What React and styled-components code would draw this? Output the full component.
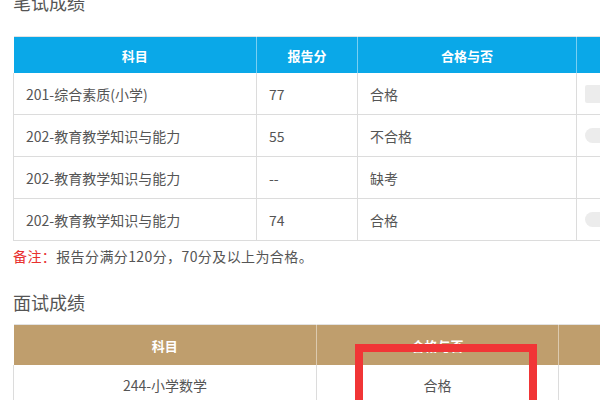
import React from 'react';
import styled, { createGlobalStyle } from 'styled-components';

const GlobalStyle = createGlobalStyle`
    html, body {
        margin: 0;
        padding: 0;
        background: #fff;
        overflow: hidden;
    }
    body {
        font-family: "Noto Sans CJK SC", "Noto Sans", sans-serif;
        color: #555;
    }
`;

const Page = styled.div`
    width: 600px;
    height: 400px;
    overflow: hidden;
    padding-left: 13px;
    box-sizing: border-box;
`;

const SectionTitle = styled.h2`
    margin: ${props => props.$top}px 0 0;
    font-size: 18px;
    line-height: 22px;
    font-weight: 400;
    color: #555;
`;

const Table = styled.table`
    border-collapse: collapse;
    table-layout: fixed;
    width: ${props => props.$width}px;
    margin-top: ${props => props.$top}px;
    position: relative;
`;

const HeadCell = styled.th`
    background: ${props => props.$color};
    color: #fff;
    font-size: 13px;
    font-weight: 700;
    height: ${props => props.$height}px;
    padding: 0;
    text-align: center;
    border-right: 1px solid rgba(255, 255, 255, 0.45);
    border-top: 1px solid #e2e2e2;
`;

const Cell = styled.td`
    height: ${props => props.$height}px;
    padding: 0 12px;
    font-size: 14px;
    color: #555;
    text-align: ${props => (props.$center ? 'center' : 'left')};
    border: 1px solid #dcdcdc;
    border-top: 0;
    white-space: nowrap;
    overflow: hidden;
`;

const Blob = styled.div`
    width: 22px;
    height: ${props => props.$h}px;
    background: #ececec;
    border-radius: ${props => props.$round}px 0 0 ${props => props.$round}px;
    margin-left: -4px;
`;

const Note = styled.p`
    margin: 5px 0 0;
    font-size: 14px;
    line-height: 20px;
    letter-spacing: 0.4px;
    color: #555;
`;

const Red = styled.span`
    color: #e8312f;
`;

const Wrap = styled.div`
    position: relative;
`;

const Highlight = styled.div`
    position: absolute;
    left: 342px;
    top: 20px;
    width: 182px;
    height: 80px;
    border: 8px solid #f13536;
    box-sizing: border-box;
`;

const written = [
    ['201-综合素质(小学)', '77', '合格', { h: 18, r: 2 }],
    ['202-教育教学知识与能力', '55', '不合格', { h: 15, r: 8 }],
    ['202-教育教学知识与能力', '--', '缺考', null],
    ['202-教育教学知识与能力', '74', '合格', { h: 15, r: 8 }],
];

const App = () => {
    return (
        <Page>
            <GlobalStyle />
            <SectionTitle $top={-9}>笔试成绩</SectionTitle>

            <Table $width={640} $top={23}>
                <colgroup>
                    <col style={{ width: 243 }} />
                    <col style={{ width: 101 }} />
                    <col style={{ width: 219 }} />
                    <col style={{ width: 77 }} />
                </colgroup>
                <thead>
                    <tr>
                        <HeadCell $color="#0aa8e8" $height={36}>科目</HeadCell>
                        <HeadCell $color="#0aa8e8" $height={36}>报告分</HeadCell>
                        <HeadCell $color="#0aa8e8" $height={36}>合格与否</HeadCell>
                        <HeadCell $color="#0aa8e8" $height={36}></HeadCell>
                    </tr>
                </thead>
                <tbody>
                    {written.map((row, i) => (
                        <tr key={i}>
                            <Cell $height={41}>{row[0]}</Cell>
                            <Cell $height={41}>{row[1]}</Cell>
                            <Cell $height={41}>{row[2]}</Cell>
                            <Cell $height={41}>
                                {row[3] ? <Blob $h={row[3].h} $round={row[3].r} /> : null}
                            </Cell>
                        </tr>
                    ))}
                </tbody>
            </Table>

            <Note><Red>备注：</Red>报告分满分120分，70分及以上为合格。</Note>

            <SectionTitle $top={25}>面试成绩</SectionTitle>

            <Wrap>
                <Table $width={640} $top={11}>
                    <colgroup>
                        <col style={{ width: 303 }} />
                        <col style={{ width: 242 }} />
                        <col style={{ width: 95 }} />
                    </colgroup>
                    <thead>
                        <tr>
                            <HeadCell $color="#bf9e6d" $height={40}>科目</HeadCell>
                            <HeadCell $color="#bf9e6d" $height={40}>合格与否</HeadCell>
                            <HeadCell $color="#bf9e6d" $height={40}></HeadCell>
                        </tr>
                    </thead>
                    <tbody>
                        <tr>
                            <Cell $height={40} $center>244-小学数学</Cell>
                            <Cell $height={40} $center>合格</Cell>
                            <Cell $height={40}></Cell>
                        </tr>
                    </tbody>
                </Table>
                <Highlight />
            </Wrap>
        </Page>
    );
};

export default App;
